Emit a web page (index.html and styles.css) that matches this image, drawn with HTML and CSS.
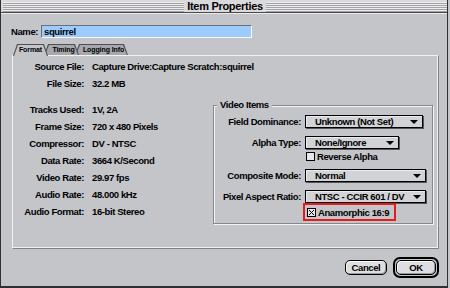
FILE: index.html
```html
<!DOCTYPE html>
<html>
	<head>
		<meta charset="UTF-8">
		<title>Item Properties</title>
		<link rel="stylesheet" href="styles.css">
	</head>
	<body>
		<div class="window">
			<div class="titlebar">
				<span class="stripes"></span>
				<span class="title">Item Properties</span>
				<span class="stripes"></span>
			</div>
			<div class="content">
				<div class="name-row">
					<span class="name-label">Name:</span>
					<span class="name-field">squirrel</span>
				</div>
				<div class="tabs">
					<div class="tab tab-format active"><span>Format</span></div>
					<div class="tab tab-timing"><span>Timing</span></div>
					<div class="tab tab-logging"><span>Logging Info</span></div>
				</div>
				<div class="panel">
					<div class="rows">
						<span class="label">Source File:</span><span>Capture Drive:Capture Scratch:squirrel</span>
						<span class="label">File Size:</span><span>32.2 MB</span>
					</div>
					<div class="lower">
						<div class="rows left">
							<span class="label">Tracks Used:</span><span>1V, 2A</span>
							<span class="label">Frame Size:</span><span>720 x 480 Pixels</span>
							<span class="label">Compressor:</span><span>DV - NTSC</span>
							<span class="label">Data Rate:</span><span>3664 K/Second</span>
							<span class="label">Video Rate:</span><span>29.97 fps</span>
							<span class="label">Audio Rate:</span><span>48.000 kHz</span>
							<span class="label">Audio Format:</span><span>16-bit Stereo</span>
						</div>
						<fieldset class="group">
							<legend>Video Items</legend>
							<div class="field">
								<span class="label">Field Dominance:</span>
								<div class="popup popup-dominance"><span>Unknown (Not Set)</span><i class="arrow"></i></div>
							</div>
							<div class="field">
								<span class="label">Alpha Type:</span>
								<div class="popup popup-alpha"><span>None/Ignore</span><i class="arrow"></i></div>
							</div>
							<div class="field check">
								<svg class="box" viewBox="0 0 9 9"><rect x=".5" y=".5" width="8" height="8" fill="#e6e6e8" stroke="#000"/></svg>
								<span>Reverse Alpha</span>
							</div>
							<div class="field after-check">
								<span class="label">Composite Mode:</span>
								<div class="popup popup-mode"><span>Normal</span><i class="arrow"></i></div>
							</div>
							<div class="field">
								<span class="label">Pixel Aspect Ratio:</span>
								<div class="popup popup-mode"><span>NTSC - CCIR 601 / DV</span><i class="arrow"></i></div>
							</div>
							<div class="field flag">
								<div class="flag-box">
									<svg class="box" viewBox="0 0 9 9"><rect x=".5" y=".5" width="8" height="8" fill="#e6e6e8" stroke="#000"/><path d="M2 2l5 5M7 2l-5 5" stroke="#000" stroke-width="1"/></svg>
									<span>Anamorphic 16:9</span>
								</div>
							</div>
						</fieldset>
					</div>
				</div>
				<div class="buttons">
					<button class="btn btn-cancel">Cancel</button>
					<span class="default-ring"><button class="btn">OK</button></span>
				</div>
			</div>
		</div>
	</body>
</html>
```

FILE: styles.css
```css
body{
	margin: 0;
	background: #c4c5c9;
	font-family: "Liberation Sans", Arial, sans-serif;
	font-weight: bold;
	font-size: 9.5px;
	letter-spacing: -0.4px;
	color: #000;
}
.window{
	width: 448px;
	height: 288px;
	box-sizing: border-box;
	border-left: 1px solid #303033;
	border-right: 1px solid #303033;
	border-bottom: 2px solid #303033;
	background: #c4c5c9;
}
/* title bar */
.titlebar{
	display: flex;
	align-items: center;
	height: 13px;
	box-sizing: border-box;
	padding: 1px 0 0 2px;
	border-bottom: 1px solid #4a4a4e;
	background: #dadadd;
	box-shadow: 0 1px 0 #ececee;
}
.stripes{
	flex: 1;
	height: 10px;
	background: repeating-linear-gradient(#ececee 0 1px, #a2a3a7 1px 2px);
}
.title{
	padding: 0 3px;
	font-size: 11px;
	letter-spacing: -0.3px;
	line-height: 11px;
}
.content{
	padding: 0 8px 0 11px;
}
/* name */
.name-row{
	display: flex;
	align-items: center;
	height: 13px;
	margin-top: 12px;
}
.name-label{
	width: 30px;
	margin-left: -1px;
}
.name-field{
	width: 211px;
	height: 13px;
	box-sizing: border-box;
	border: 1px solid;
	border-color: #6e6f73 #f8f8f8 #f8f8f8 #6e6f73;
	background: #9ccbfd;
	padding-left: 2px;
	line-height: 11px;
}
/* tabs */
.tabs{
	display: flex;
	height: 11px;
	margin: 6px 0 0 1px;
	position: relative;
	z-index: 1;
}
.tab{
	position: relative;
	height: 11px;
	box-sizing: border-box;
	text-align: center;
	font-size: 7px;
	letter-spacing: -0.1px;
	line-height: 11px;
	white-space: nowrap;
}
.tab span{
	position: relative;
	z-index: 1;
}
.tab::before,.tab::after{
	content: "";
	position: absolute;
	clip-path: polygon(4px 0, calc(100% - 4px) 0, 100% 100%, 0 100%);
}
.tab::before{
	inset: 0;
	background: #505155;
}
.tab::after{
	inset: 1px 1px 0;
	background: #a7a8ac;
}
.tab-format{
	width: 35px;
	z-index: 3;
}
.tab-timing{
	width: 35px;
	margin-left: -4px;
	padding-left: 4px;
	z-index: 2;
}
.tab-logging{
	width: 53px;
	margin-left: -4px;
	padding-left: 4px;
	z-index: 1;
}
.tab.active{
	height: 12px;
}
.tab.active::after{
	background: #c4c5c9;
}
/* panel */
.panel{
	height: 194px;
	box-sizing: border-box;
	border: 1px solid;
	border-color: #f2f2f3 #808185 #808185 #f2f2f3;
	box-shadow: inset -1px -1px 0 #f2f2f3;
	padding-top: 2px;
}
.rows{
	display: grid;
	grid-template-columns: 71px auto;
	column-gap: 8px;
	grid-auto-rows: 17px;
	align-items: center;
	white-space: nowrap;
}
.label{
	text-align: right;
	white-space: nowrap;
}
.lower{
	display: flex;
	align-items: flex-start;
	margin-top: 9px;
}
.left{
	width: 200px;
	flex: none;
}
/* video items */
.group{
	width: 220px;
	min-width: 0;
	box-sizing: border-box;
	margin: -2px 0 0;
	padding: 4px 0 2px 3px;
	border: 1px solid #87888c;
	box-shadow: inset 1px 1px 0 #f4f4f5, 1px 1px 0 #f4f4f5;
}
.group legend{
	padding: 0 3px;
	line-height: 12px;
	background: #c4c5c9;
}
.field{
	display: flex;
	align-items: center;
	height: 13px;
	margin-top: 8px;
	white-space: nowrap;
}
.field:first-of-type{
	margin-top: 0;
}
.field .label{
	display: flex;
	justify-content: flex-end;
	width: 84px;
	margin-right: 4px;
	flex: none;
}
.field.check{
	height: 12px;
	margin-top: 1px;
	padding-left: 89px;
}
.field.after-check{
	margin-top: 7px;
}
.field.flag{
	height: 18px;
	margin-top: 0;
	padding-left: 86px;
}
.popup{
	display: flex;
	align-items: center;
	height: 13px;
	box-sizing: border-box;
	border: 1px solid #000;
	background: #d2d3d6;
	box-shadow: inset 1px 1px 0 #ececee, 1px 1px 0 #55565a;
	padding-left: 9px;
	line-height: 11px;
}
.popup-dominance{
	width: 118px;
}
.popup-alpha{
	width: 94px;
}
.popup-mode{
	width: 121px;
}
.arrow{
	margin-left: auto;
	margin-right: 4px;
	width: 0;
	height: 0;
	flex: none;
	border-left: 4px solid transparent;
	border-right: 4px solid transparent;
	border-top: 4px solid #000;
}
.box{
	display: block;
	width: 9px;
	height: 9px;
	margin-right: 2px;
	flex: none;
}
.flag-box{
	display: flex;
	align-items: center;
	height: 18px;
	box-sizing: border-box;
	border: 2px solid #e41c1c;
	padding: 0 5px 0 2px;
}
/* buttons */
.buttons{
	display: flex;
	justify-content: flex-end;
	align-items: center;
	gap: 6px;
	margin-top: 8px;
}
.btn{
	font: inherit;
	letter-spacing: inherit;
	color: #000;
	height: 15px;
	box-sizing: border-box;
	border: 1px solid #000;
	border-radius: 5px;
	background: #dedee1;
	box-shadow: inset 1px 1px 0 #fafafa, inset -1px -1px 0 #9a9a9e;
	padding: 0;
	line-height: 13px;
}
.btn-cancel{
	width: 42px;
}
.default-ring{
	display: flex;
	width: 46px;
	height: 21px;
	box-sizing: border-box;
	border: 2px solid #000;
	border-radius: 7px;
	padding: 1px;
}
.default-ring .btn{
	width: 100%;
	height: 100%;
}
```
